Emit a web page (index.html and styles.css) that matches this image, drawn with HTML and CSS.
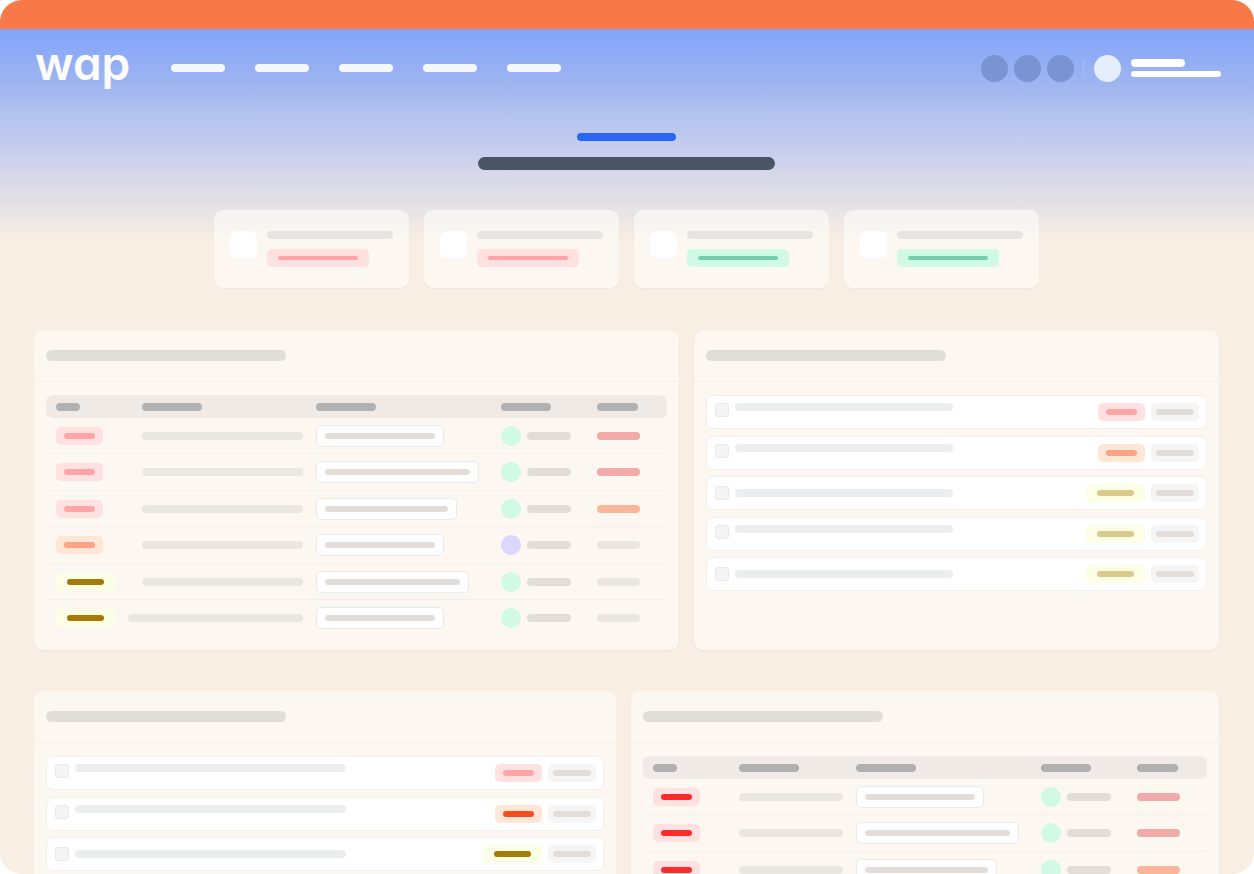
FILE: index.html
```html
<!DOCTYPE html>
<html lang="en">
<head>
    <meta charset="UTF-8">
    <meta name="viewport" content="width=device-width, initial-scale=1.0">
    <title>wap</title>
    <link rel="stylesheet" href="styles.css">
</head>
<body>
    <div class="app">
        <div class="banner"></div>
        <div class="page">
            <header class="header">
                <a class="logo" href="#">wap</a>
                <nav class="nav">
                    <a href="#" aria-label="Home"></a>
                    <a href="#" aria-label="Projects"></a>
                    <a href="#" aria-label="Tasks"></a>
                    <a href="#" aria-label="Reports"></a>
                    <a href="#" aria-label="Settings"></a>
                </nav>
                <div class="tools">
                    <button class="round" type="button" aria-label="Search"></button>
                    <button class="round" type="button" aria-label="Help"></button>
                    <button class="round" type="button" aria-label="Notifications"></button>
                </div>
                <div class="user">
                    <span class="user-photo"></span>
                    <div class="user-lines">
                        <span class="user-name"></span>
                        <span class="user-mail"></span>
                    </div>
                </div>
            </header>

            <main>
                <div class="hero">
                    <span class="hero-label"></span>
                    <span class="hero-title"></span>
                </div>

                <div class="stats">
                    <div class="stat">
                        <span class="stat-icon"></span>
                        <div class="stat-text">
                            <span class="stat-label"></span>
                            <span class="stat-tag red"><i></i></span>
                        </div>
                    </div>
                    <div class="stat">
                        <span class="stat-icon"></span>
                        <div class="stat-text">
                            <span class="stat-label"></span>
                            <span class="stat-tag red"><i></i></span>
                        </div>
                    </div>
                    <div class="stat">
                        <span class="stat-icon"></span>
                        <div class="stat-text">
                            <span class="stat-label"></span>
                            <span class="stat-tag green"><i></i></span>
                        </div>
                    </div>
                    <div class="stat">
                        <span class="stat-icon"></span>
                        <div class="stat-text">
                            <span class="stat-label"></span>
                            <span class="stat-tag green"><i></i></span>
                        </div>
                    </div>
                </div>

                <div class="row row-top">
                    <section class="panel">
                        <div class="panel-head"><span class="panel-title"></span></div>
                        <div class="panel-body">
                            <table>
                                <colgroup>
                                    <col class="c-level"><col><col class="c-field"><col class="c-owner"><col class="c-date">
                                </colgroup>
                                <thead>
                                    <tr>
                                        <th><i class="w-24"></i></th>
                                        <th><i class="w-60"></i></th>
                                        <th><i class="w-60"></i></th>
                                        <th><i class="w-50"></i></th>
                                        <th><i class="w-41"></i></th>
                                    </tr>
                                </thead>
                                <tbody>
                                    <tr>
                                        <td><span class="badge red"><i></i></span></td>
                                        <td><span class="name"></span></td>
                                        <td><span class="field"><i class="w-110"></i></span></td>
                                        <td><div class="owner"><span class="avatar"></span><i></i></div></td>
                                        <td><span class="date late"></span></td>
                                    </tr>
                                    <tr>
                                        <td><span class="badge red"><i></i></span></td>
                                        <td><span class="name"></span></td>
                                        <td><span class="field"><i class="w-145"></i></span></td>
                                        <td><div class="owner"><span class="avatar"></span><i></i></div></td>
                                        <td><span class="date late"></span></td>
                                    </tr>
                                    <tr>
                                        <td><span class="badge red"><i></i></span></td>
                                        <td><span class="name"></span></td>
                                        <td><span class="field"><i class="w-123"></i></span></td>
                                        <td><div class="owner"><span class="avatar"></span><i></i></div></td>
                                        <td><span class="date soon"></span></td>
                                    </tr>
                                    <tr>
                                        <td><span class="badge orange"><i></i></span></td>
                                        <td><span class="name"></span></td>
                                        <td><span class="field"><i class="w-110"></i></span></td>
                                        <td><div class="owner"><span class="avatar violet"></span><i></i></div></td>
                                        <td><span class="date"></span></td>
                                    </tr>
                                    <tr>
                                        <td><span class="badge yellow strong"><i></i></span></td>
                                        <td><span class="name"></span></td>
                                        <td><span class="field"><i class="w-135"></i></span></td>
                                        <td><div class="owner"><span class="avatar"></span><i></i></div></td>
                                        <td><span class="date"></span></td>
                                    </tr>
                                    <tr>
                                        <td><span class="badge yellow strong"><i></i></span></td>
                                        <td><span class="name wide"></span></td>
                                        <td><span class="field"><i class="w-110"></i></span></td>
                                        <td><div class="owner"><span class="avatar"></span><i></i></div></td>
                                        <td><span class="date"></span></td>
                                    </tr>
                                </tbody>
                            </table>
                        </div>
                    </section>

                    <section class="panel">
                        <div class="panel-head"><span class="panel-title"></span></div>
                        <div class="panel-body">
                            <ul class="tasks">
                                <li>
                                    <input type="checkbox" aria-label="Task 1">
                                    <span class="task-name"></span>
                                    <span class="badge red"><i></i></span>
                                    <span class="badge gray"><i></i></span>
                                </li>
                                <li>
                                    <input type="checkbox" aria-label="Task 2">
                                    <span class="task-name"></span>
                                    <span class="badge orange"><i></i></span>
                                    <span class="badge gray"><i></i></span>
                                </li>
                                <li class="middle">
                                    <input type="checkbox" aria-label="Task 3">
                                    <span class="task-name"></span>
                                    <span class="badge yellow"><i></i></span>
                                    <span class="badge gray"><i></i></span>
                                </li>
                                <li>
                                    <input type="checkbox" aria-label="Task 4">
                                    <span class="task-name"></span>
                                    <span class="badge yellow"><i></i></span>
                                    <span class="badge gray"><i></i></span>
                                </li>
                                <li class="middle">
                                    <input type="checkbox" aria-label="Task 5">
                                    <span class="task-name"></span>
                                    <span class="badge yellow"><i></i></span>
                                    <span class="badge gray"><i></i></span>
                                </li>
                            </ul>
                        </div>
                    </section>
                </div>

                <div class="row row-bottom">
                    <section class="panel">
                        <div class="panel-head"><span class="panel-title"></span></div>
                        <div class="panel-body">
                            <ul class="tasks tasks-long">
                                <li>
                                    <input type="checkbox" aria-label="Request 1">
                                    <span class="task-name"></span>
                                    <span class="badge red"><i></i></span>
                                    <span class="badge gray"><i></i></span>
                                </li>
                                <li>
                                    <input type="checkbox" aria-label="Request 2">
                                    <span class="task-name"></span>
                                    <span class="badge orange strong"><i></i></span>
                                    <span class="badge gray"><i></i></span>
                                </li>
                                <li class="middle">
                                    <input type="checkbox" aria-label="Request 3">
                                    <span class="task-name"></span>
                                    <span class="badge yellow strong"><i></i></span>
                                    <span class="badge gray"><i></i></span>
                                </li>
                            </ul>
                        </div>
                    </section>

                    <section class="panel">
                        <div class="panel-head"><span class="panel-title"></span></div>
                        <div class="panel-body">
                            <table>
                                <colgroup>
                                    <col class="c-level"><col><col class="c-field"><col class="c-owner"><col class="c-date">
                                </colgroup>
                                <thead>
                                    <tr>
                                        <th><i class="w-24"></i></th>
                                        <th><i class="w-60"></i></th>
                                        <th><i class="w-60"></i></th>
                                        <th><i class="w-50"></i></th>
                                        <th><i class="w-41"></i></th>
                                    </tr>
                                </thead>
                                <tbody>
                                    <tr>
                                        <td><span class="badge red strong"><i></i></span></td>
                                        <td><span class="name"></span></td>
                                        <td><span class="field"><i class="w-110"></i></span></td>
                                        <td><div class="owner"><span class="avatar"></span><i></i></div></td>
                                        <td><span class="date late"></span></td>
                                    </tr>
                                    <tr>
                                        <td><span class="badge red strong"><i></i></span></td>
                                        <td><span class="name"></span></td>
                                        <td><span class="field"><i class="w-145"></i></span></td>
                                        <td><div class="owner"><span class="avatar"></span><i></i></div></td>
                                        <td><span class="date late"></span></td>
                                    </tr>
                                    <tr>
                                        <td><span class="badge red strong"><i></i></span></td>
                                        <td><span class="name"></span></td>
                                        <td><span class="field"><i class="w-123"></i></span></td>
                                        <td><div class="owner"><span class="avatar"></span><i></i></div></td>
                                        <td><span class="date soon"></span></td>
                                    </tr>
                                </tbody>
                            </table>
                        </div>
                    </section>
                </div>
            </main>
        </div>
    </div>
</body>
</html>
```
FILE: styles.css
```css
* {
    box-sizing: border-box;
}
body {
    margin: 0;
    background-color: #ffffff;
    font-family: Inter, "Liberation Sans", sans-serif;
}
span, i {
    display: block;
}
.app {
    height: 100vh;
    overflow: hidden auto;
    scrollbar-width: none;
    border-radius: 22px;
    background-color: #f9eee3;
}
.banner {
    height: 29px;
    background-color: #f87848;
}
.page {
    padding-bottom: 41px;
    background: linear-gradient(#81a4f9 0, #9fb5f1 55px, #b5c3ef 88px, #cbd1ee 128px, #d6d7e8 145px, #e2e0e7 172px, #f9eee3 212px);
}

/* Header */
.header {
    display: flex;
    align-items: center;
    height: 78px;
    padding: 0 33px 0 35px;
}
.logo {
    width: 96px;
    margin-right: 40px;
    padding-bottom: 10px;
    color: #fcfcfd;
    font-size: 46px;
    font-weight: 600;
    line-height: 60px;
    text-decoration: none;
    font-feature-settings: "cv11"; /* single-storey a */
}
.nav {
    display: flex;
    gap: 30px;
}
.nav a {
    width: 54px;
    height: 8px;
    border-radius: 4px;
    background-color: #f4f7fe;
}
.tools {
    display: flex;
    gap: 6px;
    margin-left: auto;
}
.round {
    width: 27px;
    height: 27px;
    padding: 0;
    border: 0;
    border-radius: 50%;
    background-color: #7a94d1;
}
.user {
    display: flex;
    align-items: center;
    gap: 10px;
}
.user::before {
    content: "";
    width: 1px;
    height: 17px;
    margin-left: 9px;
    background-color: #a9bcf3;
}
.user-photo {
    width: 27px;
    height: 27px;
    border-radius: 50%;
    background-color: #e6edfd;
}
.user-name {
    width: 54px;
    height: 8px;
    margin-bottom: 4px;
    border-radius: 4px;
    background-color: #ffffff;
}
.user-mail {
    width: 90px;
    height: 6px;
    border-radius: 3px;
    background-color: #ffffff;
}

main {
    padding: 26px 35px 0 34px;
}
.hero {
    display: flex;
    flex-direction: column;
    align-items: center;
    gap: 16px;
}
.hero-label {
    width: 99px;
    height: 8px;
    border-radius: 4px;
    background-color: #2966f3;
}
.hero-title {
    width: 297px;
    height: 13px;
    border-radius: 7px;
    background-color: #4a5465;
}

/* Stat cards */
.stats {
    display: grid;
    grid-template-columns: repeat(4, minmax(0, 195px));
    justify-content: center;
    gap: 15px;
    margin: 40px 0 42px;
}
.stat {
    display: flex;
    gap: 10px;
    padding: 21px 16px;
    border-radius: 9px;
    background-color: rgba(254, 254, 250, 0.6);
    box-shadow: 0 1px 2px rgba(0, 0, 0, 0.04);
}
.stat-icon {
    flex: none;
    width: 27px;
    height: 27px;
    border-radius: 7px;
    background-color: #ffffff;
}
.stat-text {
    flex: 1;
}
.stat-label {
    height: 8px;
    margin-bottom: 10px;
    border-radius: 4px;
    background-color: #e8e4e1;
}
.stat-tag {
    width: 102px;
    max-width: 100%;
    padding: 7px 11px;
    border-radius: 5px;
}
.stat-tag i {
    height: 4px;
    border-radius: 2px;
}

/* Panels */
.row {
    display: grid;
    gap: 15px;
    margin-bottom: 41px;
}
.row-top {
    grid-template-columns: 645fr 525fr;
}
.row-bottom {
    grid-template-columns: 582fr 588fr;
}
.panel {
    min-width: 0;
    border-radius: 9px;
    background-color: #fcf7f0;
    box-shadow: 0 1px 2px rgba(0, 0, 0, 0.05);
}
.panel-head {
    display: flex;
    align-items: center;
    height: 52px;
    padding: 0 12px;
    border-bottom: 1px solid #f5f0eb;
}
.panel-title {
    width: 240px;
    height: 11px;
    border-radius: 6px;
    background-color: #e1ded9;
}
.panel-body {
    padding: 13px 12px;
}

/* Badges */
.badge {
    width: 47px;
    height: 18px;
    padding: 6px 8px;
    border-radius: 5px;
}
.badge i {
    height: 6px;
    border-radius: 3px;
}
.badge.yellow {
    width: 59px;
    padding: 6px 11px;
}
.badge.gray {
    width: 48px;
    padding: 6px 5px;
}
.red {
    background-color: #ffe1e1;
}
.red i {
    background-color: #ffa5a5;
}
.red.strong i {
    background-color: #ff2b2b;
}
.orange {
    background-color: #ffe6d6;
}
.orange i {
    background-color: #fba384;
}
.orange.strong i {
    background-color: #f54e1c;
}
.yellow {
    background-color: #fcffe5;
}
.yellow i {
    background-color: #dbc98c;
}
.yellow.strong i {
    background-color: #a67b05;
}
.green {
    background-color: #d0fae5;
}
.green i {
    background-color: #73cfab;
}
.gray {
    background-color: #f5f5f5;
}
.gray i {
    background-color: #e2ddd9;
}

/* Table */
table {
    width: 100%;
    table-layout: fixed;
    border-collapse: separate;
    border-spacing: 0;
}
th, td {
    padding: 0;
    vertical-align: middle;
}
th:first-child, td:first-child {
    padding-left: 10px;
}
th {
    height: 23px;
    background-color: #efeae6;
}
th:first-child {
    border-radius: 7px 0 0 7px;
}
th:last-child {
    border-radius: 0 7px 7px 0;
}
th i {
    height: 8px;
    border-radius: 4px;
    background-color: #b1b1b1;
}
td {
    height: 36px;
    border-bottom: 1px solid #f3eee9;
}
tr:nth-child(even) td {
    height: 37px;
}
tr:last-child td {
    border-bottom-color: transparent;
}
.c-level {
    width: 96px;
}
.c-field {
    width: 185px;
}
.c-owner {
    width: 96px;
}
.c-date {
    width: 70px;
}
.name {
    width: calc(100% - 13px);
    height: 8px;
    border-radius: 4px;
    background-color: #eae6e1;
}
.name.wide {
    width: calc(100% + 1px);
    margin-left: -14px;
}
.field {
    width: fit-content;
    padding: 7px 8px;
    border: 1px solid #e9eaeb;
    border-radius: 5px;
    background-color: #fefefe;
}
.field i {
    height: 6px;
    border-radius: 3px;
    background-color: #e2ddd9;
}
.owner {
    display: flex;
    align-items: center;
    gap: 6px;
}
.owner i {
    width: 44px;
    height: 8px;
    border-radius: 4px;
    background-color: #e2ddd9;
}
.avatar {
    width: 20px;
    height: 20px;
    border-radius: 50%;
    background-color: #d0fae5;
}
.avatar.violet {
    background-color: #ddd6ff;
}
.date {
    width: 43px;
    height: 8px;
    border-radius: 4px;
    background-color: #eae6e1;
}
.date.late {
    background-color: #f2aaa8;
}
.date.soon {
    background-color: #fbb598;
}

/* Skeleton widths */
.w-24 { width: 24px; }
.w-41 { width: 41px; }
.w-50 { width: 50px; }
.w-60 { width: 60px; }
.w-110 { width: 110px; }
.w-123 { width: 123px; }
.w-135 { width: 135px; }
.w-145 { width: 145px; }

/* Task lists */
.tasks {
    margin: 0;
    padding: 0;
    list-style: none;
}
.tasks li {
    display: flex;
    align-items: flex-start;
    height: 34px;
    margin-top: 6px;
    padding: 7px 7px 7px 8px;
    border: 1px solid #f3efec;
    border-radius: 7px;
    background-color: #ffffff;
}
.tasks li:first-child {
    margin-top: 0;
}
.tasks li:nth-child(even) {
    margin-top: 7px;
}
.tasks li.middle {
    align-items: center;
}
.tasks input {
    appearance: none;
    flex: none;
    width: 14px;
    height: 14px;
    margin: 0 6px 0 0;
    border: 1px solid #e8e8e8;
    border-radius: 3px;
    background-color: #f5f5f5;
}
.task-name {
    width: 45%;
    height: 8px;
    margin-right: auto;
    border-radius: 4px;
    background-color: #ecedee;
}
.tasks-long .task-name {
    width: 50%;
}
.tasks .gray {
    margin-left: 6px;
}
```
